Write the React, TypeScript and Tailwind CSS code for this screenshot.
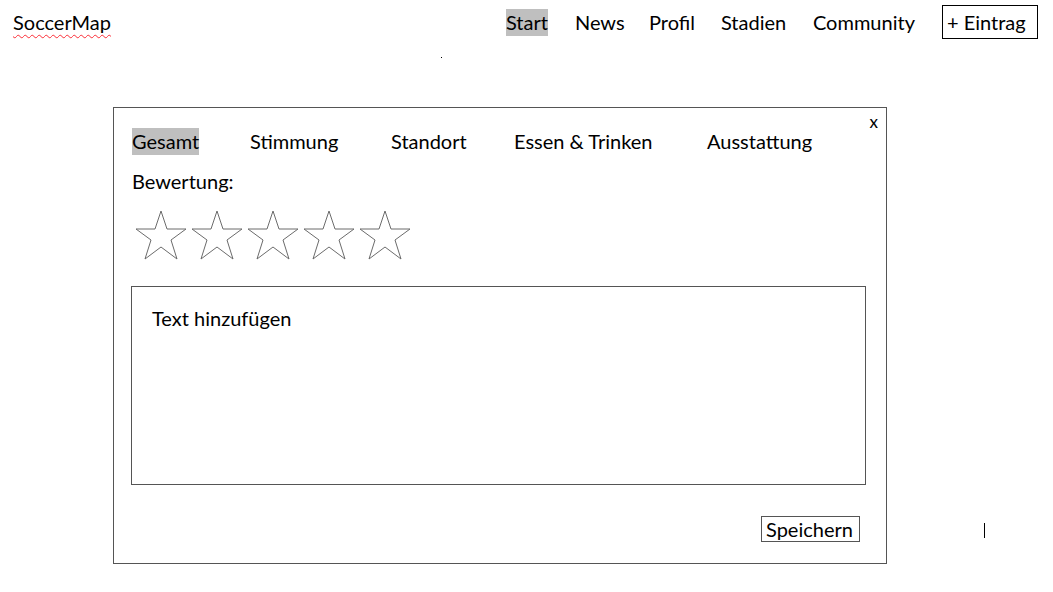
const font = { fontFamily: 'Lato, "Open Sans", sans-serif' };

function Star() {
  return (
    <svg width="52" height="50" viewBox="0 0 52 50" className="shrink-0">
      <polygon
        points="26,1 32,19 51,19 36,30 42,49 26,37 10,49 16,30 1,19 20,19"
        fill="none"
        stroke="#6b6b6b"
        strokeWidth="1"
        strokeLinejoin="miter"
      />
    </svg>
  );
}

const tabs = [
  { label: 'Gesamt', w: 'w-[118px]', active: true },
  { label: 'Stimmung', w: 'w-[141px]' },
  { label: 'Standort', w: 'w-[123px]' },
  { label: 'Essen & Trinken', w: 'w-[193px]' },
  { label: 'Ausstattung', w: 'w-auto' },
];

const navItems = [
  { label: 'Start', w: 'w-[69px]', active: true },
  { label: 'News', w: 'w-[74px]' },
  { label: 'Profil', w: 'w-[72px]' },
  { label: 'Stadien', w: 'w-[92px]' },
  { label: 'Community', w: 'w-[129px]' },
];

export default function App() {
  return (
    <div className="w-[1053px] h-[592px] bg-white text-black text-[20px] leading-none relative overflow-hidden" style={font}>
      {/* Header */}
      <header className="flex items-center h-[44px]">
        <span className="ml-[13px] underline decoration-wavy decoration-red-500 decoration-1 underline-offset-4">
          SoccerMap
        </span>
        <nav className="ml-[395px] flex items-center">
          {navItems.map((n) => (
            <div key={n.label} className={n.w}>
              <span className={n.active ? 'bg-[#bfbfbf] h-[27px] inline-flex items-center pb-px' : 'inline-flex items-center h-[27px] pb-px'}>
                {n.label}
              </span>
            </div>
          ))}
          <span className="border border-black w-[96px] h-[34px] px-[4px] flex items-center">+ Eintrag</span>
        </nav>
      </header>

      <div className="ml-[441px] mt-[13px] w-px h-px bg-black" />

      {/* Bewertungs-Dialog */}
      <section className="ml-[113px] mt-[49px] w-[774px] h-[457px] border border-[#555] relative pl-[18px] pt-[20px]">
        <span className="absolute right-[8px] top-[5px] text-[17px]">x</span>

        <div className="flex items-center h-[27px]">
          {tabs.map((t) => (
            <div key={t.label} className={t.w}>
              <span className={t.active ? 'bg-[#bfbfbf] h-[27px] inline-flex items-center pb-[2px]' : 'inline-flex items-center h-[27px] pb-[2px]'}>
                {t.label}
              </span>
            </div>
          ))}
        </div>

        <div className="mt-[13px] h-[27px] flex items-center pb-[2px]">Bewertung:</div>

        <div className="mt-[15px] ml-[3px] flex gap-[4px]">
          {[0, 1, 2, 3, 4].map((i) => (
            <Star key={i} />
          ))}
        </div>

        <div className="mt-[26px] -ml-px w-[735px] h-[199px] border border-[#555] pl-[20px] pt-[21px]">
          Text hinzufügen
        </div>

        <div className="mt-[31px] flex justify-end pr-[26px]">
          <span className="border border-[#555] w-[99px] h-[26px] px-[4px] flex items-center">Speichern</span>
        </div>
      </section>

      <div className="absolute left-[984px] top-[523px] w-px h-[15px] bg-black" />
    </div>
  );
}
